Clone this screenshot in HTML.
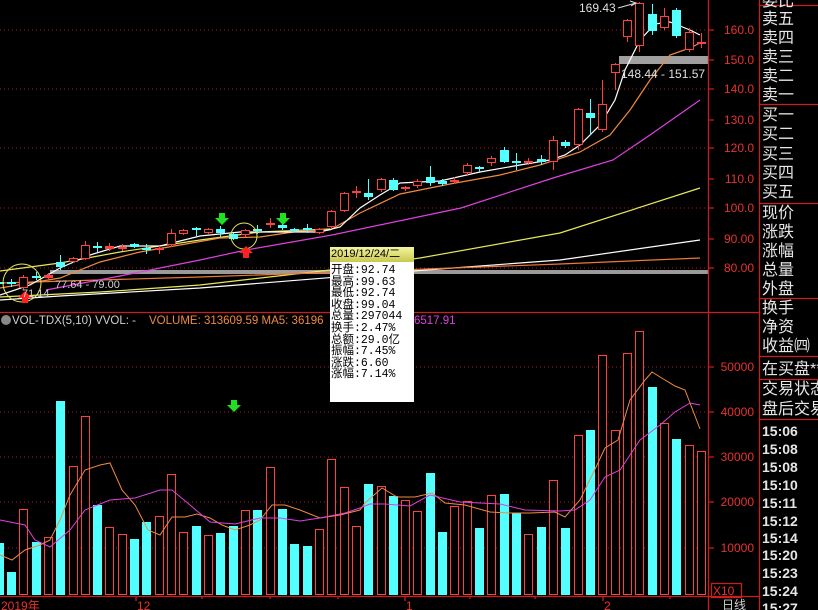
<!DOCTYPE html>
<html><head><meta charset="utf-8">
<style>
html,body{margin:0;padding:0;background:#000;width:818px;height:610px;overflow:hidden}
svg{position:absolute;left:0;top:0}
.ax{font-family:"Liberation Sans",sans-serif;font-size:12px;fill:#e8322e}
.pn{font-family:"Liberation Sans","Noto Sans CJK SC",sans-serif;font-size:16px;fill:#e6e6e6}
.tm{font-family:"Liberation Sans",sans-serif;font-size:14px;font-weight:bold;fill:#e6e6e6}
#tip{position:absolute;left:330px;top:247px;width:84px;height:155px;background:#fff;font-family:"Liberation Mono","Noto Sans CJK SC",monospace;font-size:11.5px;color:#000;line-height:11.6px}
#tip .h{background:linear-gradient(#f4f4a0,#c8c850);height:15px;line-height:15px;font-family:"Liberation Sans","Noto Sans CJK SC",sans-serif;font-size:11px;padding-left:1px;margin-bottom:3px;white-space:nowrap}
#tip div.l{padding-left:1px;white-space:nowrap}
#cd,#vb{shape-rendering:crispEdges}
</style></head><body>
<svg width="818" height="610" id="s">
<g stroke="#a02020" stroke-dasharray="1,3" stroke-width="1">
<line x1="0" y1="30" x2="708" y2="30"/><line x1="0" y1="89" x2="708" y2="89"/><line x1="0" y1="148" x2="708" y2="148"/><line x1="0" y1="208" x2="708" y2="208"/><line x1="0" y1="268" x2="708" y2="268"/>
<line x1="0" y1="367" x2="708" y2="367"/><line x1="0" y1="412" x2="708" y2="412"/><line x1="0" y1="457" x2="708" y2="457"/><line x1="0" y1="502" x2="708" y2="502"/><line x1="0" y1="548" x2="708" y2="548"/>
</g>
<rect x="50" y="270" width="658" height="4" fill="#9a9a9a"/>
<rect x="619" y="56" width="89" height="8" fill="#a0a0a0"/>
<g fill="none" stroke-width="1.2">
<polyline stroke="#e8e85a" points="0,297 100,292 200,285 330,270 420,258 560,233 700,188"/>
<polyline stroke="#ffffff" points="0,300 60,296 200,288 400,272 560,260 700,240"/>
<polyline stroke="#f07838" points="0,283 200,277 400,270 560,264 700,258"/>
<polyline stroke="#e8e85a" points="0,271 60,263 120,252 200,240 260,232 330,229"/>
<polyline stroke="#e040e0" points="46,290 120,276 200,260 246,250 332,235 461,208 553,178 613,160 650,135 700,100"/>
<polyline stroke="#f08a40" points="0,288 60,278 100,262 140,252 180,245 220,238 260,237 300,231 330,230 360,213 400,194 450,184 500,175 540,165 580,152 610,135 630,110 650,80 670,55 690,48 700,43"/>
<polyline stroke="#ffffff" points="0,295 30,285 60,268 90,255 120,246 160,246 200,236 240,232 280,232 320,232 340,227 360,208 380,195 400,183 440,181 480,172 520,165 550,160 565,155 580,145 600,125 615,100 625,70 640,40 655,24 670,22 690,30 700,35"/>
</g>
<g id="cd"></g>
<g id="vb"></g>
<g fill="none" stroke-width="1">
<polyline stroke="#f08a40" points="0,555 12,560 25,550 40,545 50,540 60,520 70,495 85,470 100,465 110,463 122,490 135,505 148,530 160,535 172,517 185,517 197,514 210,518 222,525 235,530 250,525 260,520 272,505 285,505 300,510 320,518 340,515 360,510 365,503 382,488 397,497 415,497 432,493 445,503 465,505 490,512 510,513 530,513 555,512 565,517 580,500 597,465 605,448 618,440 630,400 645,380 652,372 665,380 675,386 685,390 700,429"/>
<polyline stroke="#e040e0" points="0,520 25,525 35,540 50,547 70,530 85,510 110,500 135,498 160,490 172,490 190,505 210,522 235,524 260,518 280,518 300,521 320,518 345,513 360,508 370,504 385,504 410,506 430,495 460,502 500,504 525,510 560,511 575,510 590,500 605,477 620,470 640,440 660,425 675,412 690,403 700,405"/>
</g>
<circle cx="22" cy="283" r="19" fill="none" stroke="#e8e85a"/>
<circle cx="244" cy="236" r="13" fill="none" stroke="#e8e85a"/>
<g fill="#20e020"><path d="M219,213h6v5h4l-7,7l-7,-7h4z"/><path d="M280,213h6v5h4l-7,7l-7,-7h4z"/><path d="M231,400h6v5h4l-7,7l-7,-7h4z"/></g>
<g fill="#ff2020"><path d="M246,246l7,7h-4v5h-6v-5h-4z"/><path d="M25,291l7,7h-4v5h-6v-5h-4z"/></g>
<text x="55" y="288" font-family="Liberation Sans,sans-serif" font-size="11" fill="#cfcfcf">77.64 - 79.00</text>
<text x="22" y="297" font-family="Liberation Sans,sans-serif" font-size="11" fill="#cfcfcf">71.14</text>
<text x="621" y="78" font-family="Liberation Sans,sans-serif" font-size="12" fill="#e0e0e0">148.44 - 151.57</text>
<text x="579" y="12" font-family="Liberation Sans,sans-serif" font-size="12" fill="#e0e0e0">169.43</text>
<path d="M618,8 L636,3 M630,1 l6,2 l-5,3" stroke="#e0e0e0" fill="none"/>
<g stroke="#c81e1e" stroke-width="1.3" fill="none">
<line x1="708.5" y1="0" x2="708.5" y2="610"/>
<line x1="759.5" y1="0" x2="759.5" y2="610"/>
<line x1="0" y1="312.5" x2="759" y2="312.5"/>
<line x1="0" y1="596.5" x2="759" y2="596.5"/>
<line x1="759" y1="5.5" x2="818" y2="5.5"/><line x1="759" y1="104.5" x2="818" y2="104.5"/><line x1="759" y1="203.5" x2="818" y2="203.5"/><line x1="759" y1="298.5" x2="818" y2="298.5"/><line x1="759" y1="356.5" x2="818" y2="356.5"/><line x1="759" y1="379.5" x2="818" y2="379.5"/><line x1="759" y1="419.5" x2="818" y2="419.5"/>
<rect x="711.5" y="583.5" width="30" height="14"/>
<path d="M708,30h6M708,60h6M708,89h6M708,120h6M708,148h6M708,179h6M708,208h6M708,239h6M708,268h6M708,367h6M708,412h6M708,457h6M708,502h6M708,548h6"/>
<path d="M136,596v5M405,596v5M603,596v5M202,596v3M270,596v3M338,596v3M470,596v3M535,596v3M670,596v3"/>
</g>
<g class="ax" text-anchor="end">
<text x="754" y="34">160.0</text><text x="754" y="64">150.0</text><text x="754" y="93">140.0</text><text x="754" y="124">130.0</text><text x="754" y="152">120.0</text><text x="754" y="183">110.0</text><text x="754" y="212">100.0</text><text x="754" y="243">90.00</text><text x="754" y="272">80.00</text>
<text x="754" y="371">50000</text><text x="754" y="416">40000</text><text x="754" y="461">30000</text><text x="754" y="506">20000</text><text x="754" y="552">10000</text>
</g>
<text x="713" y="595" class="ax">X10</text>
<g class="ax" font-size="12"><text x="1" y="610">2019年</text><text x="137" y="610">12</text><text x="406" y="610">1</text><text x="604" y="610">2</text><text x="722" y="609" fill="#d0d0d0">日线</text></g>
<circle cx="6" cy="320" r="5" fill="#888"/>
<text x="12" y="324" font-family="Liberation Sans,sans-serif" font-size="11.5" fill="#d0d0d0">VOL-TDX(5,10)  VVOL: -</text>
<text x="149" y="324" font-family="Liberation Sans,sans-serif" font-size="11.5" fill="#f08a40">VOLUME: 313609.59  MA5: 36196</text>
<text x="414" y="324" font-family="Liberation Sans,sans-serif" font-size="11.5" fill="#e040e0">6517.91</text>
<g class="pn">
<text x="762" y="6">委比</text>
<text x="762" y="24">卖五</text><text x="762" y="43">卖四</text><text x="762" y="62">卖三</text><text x="762" y="81">卖二</text><text x="762" y="100">卖一</text>
<text x="762" y="120">买一</text><text x="762" y="139">买二</text><text x="762" y="159">买三</text><text x="762" y="178">买四</text><text x="762" y="197">买五</text>
<text x="762" y="218">现价</text><text x="762" y="237">涨跌</text><text x="762" y="256">涨幅</text><text x="762" y="275">总量</text><text x="762" y="294">外盘</text>
<text x="762" y="313">换手</text><text x="762" y="332">净资</text><text x="762" y="351">收益㈣</text>
<text x="762" y="374">在买盘**</text>
<text x="762" y="394">交易状态</text><text x="762" y="414">盘后交易</text>
</g>
<g class="tm">
<text x="762" y="436">15:06</text><text x="762" y="454">15:08</text><text x="762" y="472">15:08</text><text x="762" y="490">15:10</text><text x="762" y="508">15:11</text><text x="762" y="526">15:12</text><text x="762" y="543">15:14</text><text x="762" y="560">15:20</text><text x="762" y="578">15:23</text><text x="762" y="596">15:24</text><text x="762" y="613">15:27</text>
</g>
</svg>
<div id="tip"><div class="h">2019/12/24/二</div>
<div class="l">开盘:92.74</div><div class="l">最高:99.63</div><div class="l">最低:92.74</div><div class="l">收盘:99.04</div><div class="l">总量:297044</div><div class="l">换手:2.47%</div><div class="l">总额:29.0亿</div><div class="l">振幅:7.45%</div><div class="l">涨跌:6.60</div><div class="l">涨幅:7.14%</div></div>
<script>
var col="ccrcrcrrcrrccrrrcrccrcrcccrrrrcrcrrccrrcrccrcrcrcrrrrcrcrr";
var cd=[[282,284,280,286],[282,284,279,287],[277,288,275,290],[276,278,272,280],[275,278,273,279],[262,267,255,270],[258,262,257,263],[245,259,241,260],[246,248,242,252],[246,249,243,251],[247,249,244,251],[244,247,243,248],[248,250,244,254],[248,250,246,254],[233,245,229,247],[230,234,229,235],[228,230,227,236],[229,233,228,234],[229,233,226,237],[234,239,233,240],[230,235,229,237],[229,231,225,234],[223,225,218,228],[225,228,224,230],[229,230,228,231],[228,230,224,233],[229,233,228,234],[211,227,210,228],[193,211,192,212],[191,193,186,198],[193,197,179,200],[179,190,178,192],[180,190,178,191],[187,189,186,191],[181,186,179,188],[177,183,166,186],[181,184,179,186],[180,182,177,184],[165,173,163,175],[167,169,166,172],[158,163,156,166],[150,162,147,163],[161,163,153,170],[161,163,158,165],[159,162,155,165],[140,162,136,170],[142,146,140,148],[109,145,108,150],[113,118,99,135],[104,130,80,132],[64,73,63,90],[20,37,19,42],[3,46,2,52],[14,31,4,35],[16,28,8,30],[10,36,8,38],[32,50,28,52],[42,44,33,48]];
var vt=[543,572,509,542,537,401,466,416,505,527,534,539,522,516,474,532,526,535,533,526,510,510,467,509,544,546,529,459,487,526,484,486,496,500,511,473,532,506,501,528,495,494,513,534,527,480,528,435,430,355,430,353,331,387,423,439,445,451];
var h1="",h2="";
for(var i=0;i<58;i++){var x=Math.round(-5.4+i*12.32),cx=x+4.5,c=col[i],d=cd[i];
var R="#ff4040",C="#54ffff";
if(c=="r"){h1+='<rect x="'+(x+4)+'" y="'+d[2]+'" width="1" height="'+(d[3]-d[2])+'" fill="'+R+'"/><rect x="'+x+'" y="'+d[0]+'" width="9" height="'+Math.max(d[1]-d[0],2)+'" fill="'+R+'"/>';
if(d[1]-d[0]>3)h1+='<rect x="'+(x+1)+'" y="'+(d[0]+1)+'" width="7" height="'+(d[1]-d[0]-2)+'" fill="#000"/>';
h2+='<rect x="'+x+'" y="'+vt[i]+'" width="9" height="'+(595-vt[i])+'" fill="'+R+'"/><rect x="'+(x+1)+'" y="'+(vt[i]+1)+'" width="7" height="'+(593-vt[i])+'" fill="#000"/>';}
else{h1+='<rect x="'+(x+4)+'" y="'+d[2]+'" width="1" height="'+(d[3]-d[2])+'" fill="'+C+'"/><rect x="'+x+'" y="'+d[0]+'" width="9" height="'+Math.max(d[1]-d[0],2)+'" fill="'+C+'"/>';
h2+='<rect x="'+x+'" y="'+vt[i]+'" width="9" height="'+(595-vt[i])+'" fill="'+C+'"/>';}}
document.getElementById("cd").innerHTML=h1;document.getElementById("vb").innerHTML=h2;
</script>
</body></html>
